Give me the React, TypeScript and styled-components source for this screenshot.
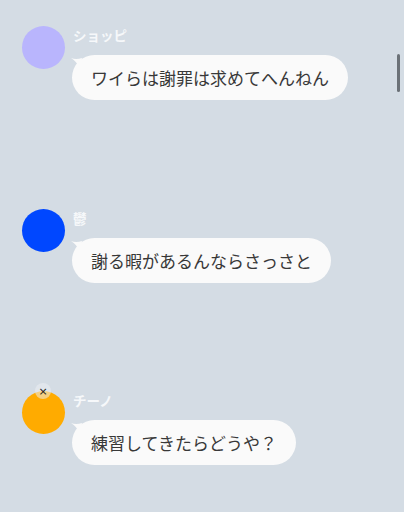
import styled, { createGlobalStyle } from 'styled-components';

interface Message {
  name: string;
  text: string;
  color: string;
  badge?: boolean;
}

const messages: Message[] = [
  { name: 'ショッピ', text: 'ワイらは謝罪は求めてへんねん', color: '#b9b5fd' },
  { name: '鬱', text: '謝る暇があるんならさっさと', color: '#0047ff' },
  { name: 'チーノ', text: '練習してきたらどうや？', color: '#ffab00', badge: true },
];

const GlobalStyle = createGlobalStyle`
  html, body {
    margin: 0;
    padding: 0;
    background: #d4dce4;
  }
  body {
    font-family: "Noto Sans CJK JP", "Noto Sans", sans-serif;
  }
`;

const Screen = styled.div`
  position: relative;
  width: 404px;
  height: 512px;
  overflow: hidden;
  background: #d4dce4;
  display: flex;
  flex-direction: column;
`;

const ChatList = styled.div`
  flex: 1;
  display: flex;
  flex-direction: column;
  padding: 26px 0 0 22px;
`;

const Row = styled.div`
  display: flex;
  align-items: flex-start;
  gap: 7px;
  height: 182.5px;
  flex-shrink: 0;
`;

const AvatarWrap = styled.div`
  position: relative;
  width: 43px;
  height: 43px;
  flex-shrink: 0;
`;

const Avatar = styled.div<{ $color: string }>`
  width: 43px;
  height: 43px;
  border-radius: 50%;
  background: ${(p) => p.$color};
`;

const CloseBadge = styled.div`
  position: absolute;
  left: 13px;
  top: -8px;
  width: 16px;
  height: 16px;
  border-radius: 50%;
  background: rgba(235, 238, 242, 0.55);
  display: flex;
  align-items: center;
  justify-content: center;
  color: #222;
  font-family: "DejaVu Sans", sans-serif;
  font-size: 11px;
  line-height: 1;
`;

const Body = styled.div`
  display: flex;
  flex-direction: column;
  align-items: flex-start;
`;

const Name = styled.div`
  color: #f6f8fa;
  font-size: 13.5px;
  font-weight: 700;
  line-height: 16px;
  height: 16px;
  margin: 1px 0 12px 1px;
`;

const Bubble = styled.div`
  position: relative;
  height: 45px;
  padding: 0 19px;
  border-radius: 23px;
  background: #fafafa;
  color: #383838;
  font-size: 17px;
  line-height: 45px;
  white-space: nowrap;
`;

const Tail = styled.svg`
  position: absolute;
  left: -2px;
  top: 2px;
`;

const ScrollThumb = styled.div`
  position: absolute;
  right: 4px;
  top: 54px;
  width: 3px;
  height: 38px;
  border-radius: 2px;
  background: #6b7177;
`;

const BottomEdge = styled.div`
  height: 3px;
  background: #dde3e9;
`;

export default function App() {
  return (
    <>
      <GlobalStyle />
      <Screen>
        <ChatList>
          {messages.map((m) => (
            <Row key={m.name}>
              <AvatarWrap>
                <Avatar $color={m.color} />
                {m.badge && <CloseBadge>×</CloseBadge>}
              </AvatarWrap>
              <Body>
                <Name>{m.name}</Name>
                <Bubble>
                  <Tail width="14" height="12" viewBox="0 0 14 12">
                    <path d="M1 1 Q6 3 12 1 L10 11 Q6 4 1 1 Z" fill="#fafafa" />
                  </Tail>
                  {m.text}
                </Bubble>
              </Body>
            </Row>
          ))}
        </ChatList>
        <BottomEdge />
        <ScrollThumb />
      </Screen>
    </>
  );
}
